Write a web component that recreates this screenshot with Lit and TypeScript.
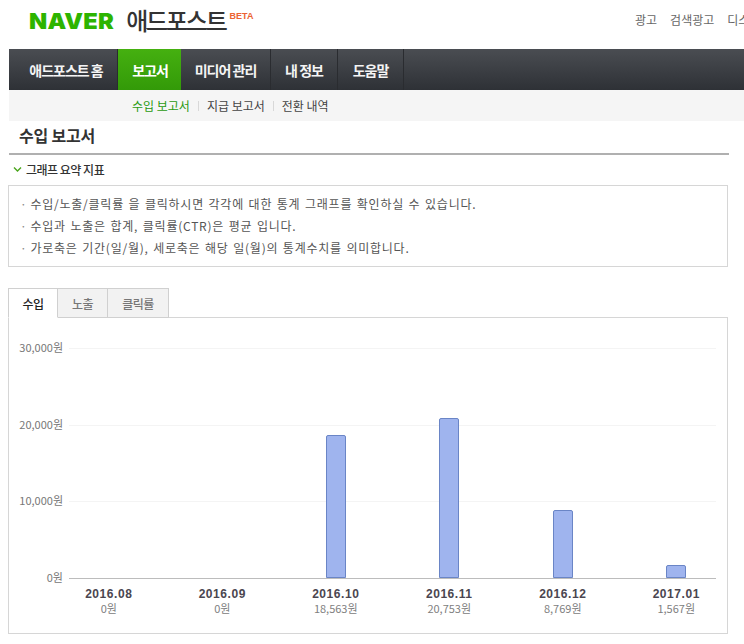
import { LitElement, html, css, unsafeCSS } from "lit";
import { customElement } from "lit/decorators.js";

const KR = unsafeCSS(`"Noto Sans CJK KR", "Liberation Sans", sans-serif`);
const data = [
  { m: "2016.08", v: 0 },
  { m: "2016.09", v: 0 },
  { m: "2016.10", v: 18563 },
  { m: "2016.11", v: 20753 },
  { m: "2016.12", v: 8769 },
  { m: "2017.01", v: 1567 },
];
const ticks = [30000, 20000, 10000, 0];
const fmt = (n: number) => n.toLocaleString("en-US") + "원";

@customElement("app-root")
export class AppRoot extends LitElement {
  static styles = css`
    :host { display: block; width: 744px; height: 644px; overflow: hidden; background: #fff; font-family: ${KR}; font-size: 12px; color: #333; }
    .page { width: 720px; margin-left: 9px; }
    .top { height: 49px; display: flex; align-items: flex-start; width: 735px; }
    .logo { margin: 9px 0 0 20px; display: flex; align-items: flex-start; }
    .naver { font-family: Inter, "Liberation Sans", sans-serif; font-weight: 900; font-size: 22px; line-height: 24px; color: #2db400; letter-spacing: 0.2px; transform: scaleX(1.075); transform-origin: left; }
    .adpost { margin-left: 18px; font-size: 24px; line-height: 26px; letter-spacing: -2.2px; color: #333; font-weight: 500; margin-top: -2px; }
    .adpost u { text-decoration: none; border-bottom: 1px solid #555; display: inline-block; line-height: 20px; height: 18px; }
    .beta { font-family: "Liberation Sans", sans-serif; font-weight: 700; font-size: 9px; line-height: 10px; color: #ec6232; margin-left: 4px; margin-top: 2px; }
    .links { margin-left: auto; display: flex; gap: 13px; padding-top: 11px; font-size: 12px; line-height: 18px; color: #666; white-space: nowrap; width: 109px; }
    .nav { width: 735px; height: 41px; display: flex; background: linear-gradient(#4a4d52, #2e3136); }
    .nav a { height: 41px; display: flex; align-items: center; justify-content: center; color: #f4f4f4; font-size: 14px; font-weight: 700; letter-spacing: -1px; border-right: 1px solid #2a2c30; box-sizing: border-box; }
    .nav a.first { padding-left: 6px; }
    .nav a.on { background: linear-gradient(#45b010, #339a08); color: #fff; border-right: none; padding-left: 1px; }
    .sub { width: 735px; height: 31px; background: #f5f5f5; display: flex; align-items: center; padding-left: 123px; box-sizing: border-box; color: #444; font-size: 12px; }
    .sub .on { color: #2a9a10; }
    .sub i { width: 1px; height: 10px; background: #d8d8d8; margin: 0 8px; }
    h1 { margin: 0; height: 32px; padding-left: 10px; font-size: 16px; line-height: 28px; font-weight: 700; color: #333; letter-spacing: -0.2px; border-bottom: 2px solid #b0b0b0; box-sizing: content-box; }
    h2 { margin: 0; height: 28px; padding: 0 0 2px 4px; display: flex; align-items: center; gap: 4px; font-size: 12px; font-weight: 500; color: #333; letter-spacing: -0.5px; }
    h2 svg { display: block; }
    .note { margin: 0 0 0 -1px; width: 720px; height: 82px; box-sizing: border-box; border: 1px solid #d6d6d6; padding: 7px 0 0 11px; list-style: none; color: #555; font-size: 12px; letter-spacing: 0.75px; word-spacing: 1.2px; }
    .note li { height: 22px; line-height: 22px; white-space: nowrap; }
    .note li::before { content: "·"; margin-right: 3px; color: #888; }
    .tabs { margin: 21px 0 0 -1px; display: flex; height: 30px; position: relative; z-index: 1; width: 161px; }
    .tab { height: 30px; box-sizing: border-box; display: flex; align-items: center; justify-content: center; border: 1px solid #d0d0d0; border-left: none; background: #f2f2f2; color: #777; font-size: 12px; font-weight: 500; letter-spacing: -0.5px; }
    .tab.on { background: #fff; color: #222; border-left: 1px solid #d0d0d0; border-bottom-color: #fff; }
    .chart { margin: -1px 0 0 -1px; width: 720px; height: 317px; box-sizing: border-box; border: 1px solid #d6d6d6; position: relative; }
    .plot { position: absolute; left: 60px; top: 30px; width: 647px; height: 230px; }
    .grid { position: absolute; left: 0; right: 0; height: 1px; background: #f4f4f4; }
    .grid.base { background: #bcbcbc; }
    .tick { position: absolute; right: calc(100% + 6px); transform: translateY(calc(-50% - 1px)); color: #777; font-size: 11px; white-space: nowrap; line-height: 14px; }
    .cols { position: absolute; left: -17px; top: 0; width: 681px; height: 100%; display: grid; grid-template-columns: repeat(6, 1fr); }
    .cols .c { display: flex; align-items: flex-end; justify-content: center; }
    .bar { width: 20px; box-sizing: border-box; background: #9fb4ee; border: 1px solid #6a85c6; border-radius: 2px 2px 0 0; }
    .labels { position: absolute; left: 43px; top: 269px; width: 681px; display: grid; grid-template-columns: repeat(6, 1fr); text-align: center; }
    .labels b { display: block; font-family: "Liberation Sans", sans-serif; font-size: 12px; line-height: 14px; color: #4a4650; font-weight: 700; letter-spacing: 0.55px; }
    .labels span { display: block; font-size: 11px; line-height: 14px; color: #808080; }
  `;

  render() {
    return html`<div class="page">
      <div class="top">
        <div class="logo">
          <span class="naver">NAVER</span><span class="adpost">애<u>드포스트</u></span><span class="beta">BETA</span>
        </div>
        <div class="links"><span>광고</span><span>검색광고</span><span>디스</span></div>
      </div>
      <nav class="nav">
        <a class="first" style="width:109px">애드포스트 홈</a>
        <a class="on" style="width:63px">보고서</a>
        <a style="width:90px">미디어 관리</a>
        <a style="width:67px">내 정보</a>
        <a style="width:66px">도움말</a>
      </nav>
      <div class="sub"><span class="on">수입 보고서</span><i></i><span>지급 보고서</span><i></i><span>전환 내역</span></div>
      <h1>수입 보고서</h1>
      <h2><svg width="9" height="7" viewBox="0 0 9 7"><path d="M1 1.5 4.5 5 8 1.5" fill="none" stroke="#4aa51c" stroke-width="1.4"/></svg>그래프 요약 지표</h2>
      <ul class="note">
        <li>수입/노출/클릭률 을 클릭하시면 각각에 대한 통계 그래프를 확인하실 수 있습니다.</li>
        <li>수입과 노출은 합계, 클릭률(CTR)은 평균 입니다.</li>
        <li>가로축은 기간(일/월), 세로축은 해당 일(월)의 통계수치를 의미합니다.</li>
      </ul>
      <div class="tabs">
        <div class="tab on" style="width:50px">수입</div>
        <div class="tab" style="width:50px">노출</div>
        <div class="tab" style="width:61px">클릭률</div>
      </div>
      <div class="chart">
        <div class="plot">
          ${ticks.map((t) => {
            const top = 230 - (t / 30000) * 230;
            return html`<div class="grid ${t === 0 ? "base" : ""}" style="top:${top}px"></div>
              <div class="tick" style="top:${top}px">${fmt(t)}</div>`;
          })}
          <div class="cols">
            ${data.map((d) => html`<div class="c">${d.v ? html`<div class="bar" style="height:${(d.v / 30000) * 230 + 1}px"></div>` : ""}</div>`)}
          </div>
        </div>
        <div class="labels">
          ${data.map((d) => html`<div><b>${d.m}</b><span>${fmt(d.v)}</span></div>`)}
        </div>
      </div>
    </div>`;
  }
}
